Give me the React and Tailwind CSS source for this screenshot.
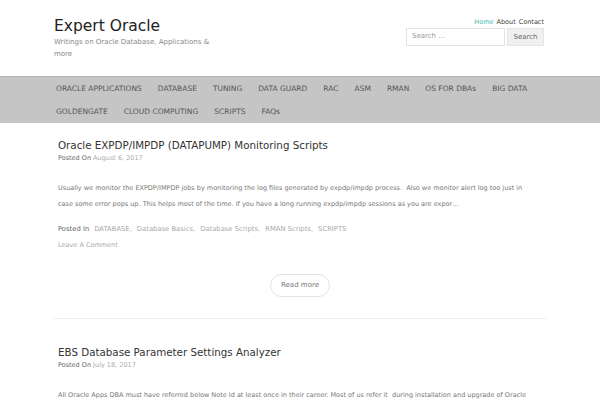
import React from "react";

const nav1 = ["ORACLE APPLICATIONS", "DATABASE", "TUNING", "DATA GUARD", "RAC", "ASM", "RMAN", "OS FOR DBAs", "BIG DATA"];
const nav2 = ["GOLDENGATE", "CLOUD COMPUTING", "SCRIPTS", "FAQs"];
const cats = ["DATABASE", "Database Basics", "Database Scripts", "RMAN Scripts", "SCRIPTS"];

function NavItem({ label }) {
  return <a className="px-[8px] text-[7.5px] text-[#555]">{label}</a>;
}

export default function App() {
  return (
    <div className="w-[600px] h-[400px] overflow-hidden bg-white" style={{ fontFamily: '"DejaVu Sans", "Liberation Sans", sans-serif' }}>
      <header className="flex justify-between pl-[54px] pr-[56px] pt-[16px] h-[76px]">
        <div>
          <h1 className="text-[15.5px] leading-[20px] text-[#222]">Expert Oracle</h1>
          <p className="mt-[0px] w-[160px] text-[7px] leading-[12px] text-[#888]">Writings on Oracle Database, Applications &amp; more</p>
        </div>
        <div className="flex flex-col items-end pt-[2px]">
          <div className="flex gap-[3px] text-[6.5px] leading-[8px] text-[#444]">
            <span className="text-[#3bb8b0]">Home</span>
            <span>About</span>
            <span>Contact</span>
          </div>
          <div className="flex gap-[2px] mt-[2px]">
            <div className="w-[99px] h-[18px] border border-[#e3e3e3] px-[5px] text-[7px] leading-[15px] text-[#999]">Search ...</div>
            <div className="w-[37px] h-[18px] bg-[#f0f0f0] border border-[#e6e6e6] text-[7px] leading-[16px] text-[#666] text-center">Search</div>
          </div>
        </div>
      </header>
      <nav className="bg-[#c5c5c5] border-t border-[#b5b5b5] px-[48px]">
        <div className="flex h-[23px] items-center">{nav1.map(n => <NavItem key={n} label={n} />)}</div>
        <div className="flex h-[23px] items-center">{nav2.map(n => <NavItem key={n} label={n} />)}</div>
      </nav>
      <main className="px-[54px]">
        <article className="pt-[14px] border-b border-[#eee] pb-[21px]">
          <div className="pl-[4px]">
            <h2 className="text-[10.3px] leading-[16px] text-[#333]">Oracle EXPDP/IMPDP (DATAPUMP) Monitoring Scripts</h2>
            <p className="text-[6.5px] leading-[10px] text-[#666]">Posted On <span className="text-[#aaa]">August 6, 2017</span></p>
            <p className="mt-[17px] pr-[12px] text-[6.5px] leading-[16px] text-[#777]">Usually we monitor the EXPDP/IMPDP jobs by monitoring the log files generated by expdp/impdp process.&nbsp; Also we monitor alert log too just in case some error pops up. This helps most of the time. If you have a long running expdp/impdp sessions as you are expor…</p>
            <p className="mt-[9px] text-[6.8px] leading-[16px] text-[#666]">Posted In<span className="ml-[5px]" />{cats.map((c, i) => <span key={c} className="text-[#aaa] mr-[5px]">{c}{i < cats.length - 1 ? "," : ""}</span>)}</p>
            <p className="text-[6.5px] leading-[16px] text-[#aaa]">Leave A Comment</p>
          </div>
          <div className="flex justify-center mt-[21px]">
            <div className="w-[60px] h-[23px] rounded-full border border-[#e2e2e2] text-[7px] leading-[21px] text-center text-[#777]">Read more</div>
          </div>
        </article>
        <article className="pl-[4px] pt-[25px]">
          <h2 className="text-[10.3px] leading-[16px] text-[#333]">EBS Database Parameter Settings Analyzer</h2>
          <p className="text-[6.5px] leading-[10px] text-[#666]">Posted On <span className="text-[#aaa]">July 18, 2017</span></p>
          <p className="mt-[17px] pr-[6px] text-[6.5px] leading-[16px] text-[#777]">All Oracle Apps DBA must have referred below Note Id at least once in their career. Most of us refer it&nbsp; during installation and upgrade of Oracle</p>
        </article>
      </main>
    </div>
  );
}
